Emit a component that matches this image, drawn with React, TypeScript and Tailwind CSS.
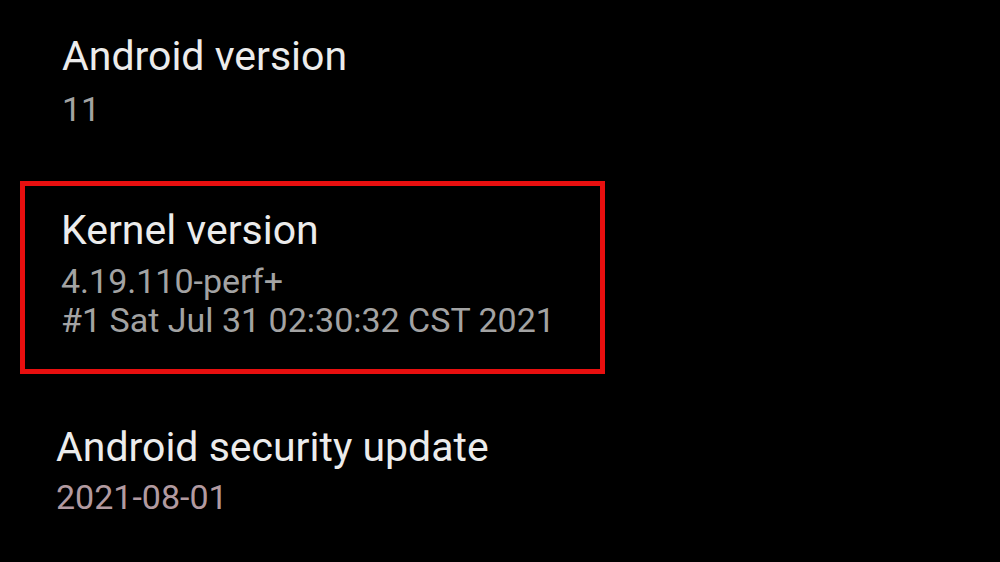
export default function App() {
  return (
    <div className="w-[1000px] h-[562px] bg-black overflow-hidden font-['Roboto',sans-serif] antialiased">
      {/* Android version */}
      <div className="pl-[62px] pt-[32px]">
        <div className="text-[41px] leading-[48px] text-[#ececec]">Android version</div>
        <div className="mt-[9px] text-[34px] leading-[40px] text-[#a3a3a3]">11</div>
      </div>

      {/* Kernel version, highlighted */}
      <div className="ml-[20px] mt-[52px] w-[585px] border-[5px] border-[#e80f0f] pl-[36px] pt-[20px] pb-[29px]">
        <div className="text-[41px] leading-[48px] text-[#ececec]">Kernel version</div>
        <div className="mt-[7px] text-[34px] leading-[40px] text-[#a3a3a3]">4.19.110-perf+</div>
        <div className="-mt-[1px] text-[34px] leading-[40px] text-[#a3a3a3]">#1 Sat Jul 31 02:30:32 CST 2021</div>
      </div>

      {/* Android security update */}
      <div className="pl-[56px] pt-[49px]">
        <div className="text-[41px] leading-[48px] text-[#ececec]">Android security update</div>
        <div className="mt-[6px] text-[34px] leading-[40px] text-[#b29aa0]">2021-08-01</div>
      </div>
    </div>
  );
}
